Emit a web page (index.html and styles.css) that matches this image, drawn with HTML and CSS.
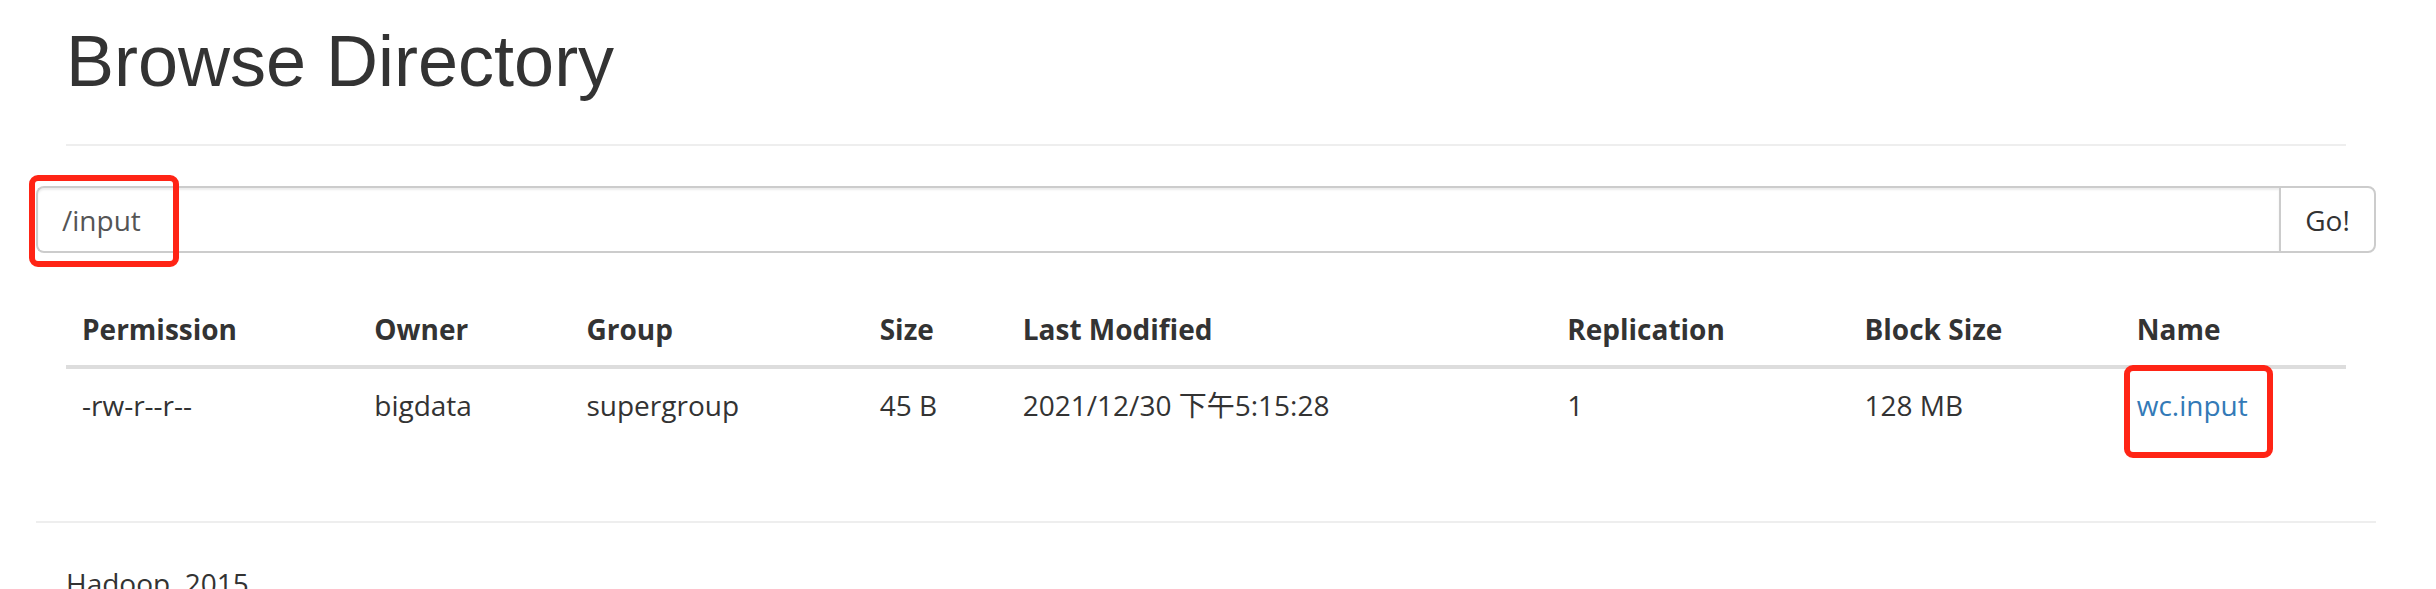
FILE: index.html
```html
<!DOCTYPE html>
<html>
<head>
<meta charset="utf-8">
<title>Browsing HDFS</title>
<link rel="stylesheet" href="styles.css">
</head>
<body>
<div class="container">
  <div class="page-header"><h1>Browse Directory</h1></div>
  <div class="row">
    <form class="nav-form" onsubmit="return false;">
      <div class="input-group">
        <input type="text" class="form-control" value="/input">
        <button class="btn" type="submit">Go!</button>
      </div>
    </form>
  </div>
  <div class="spacer"></div>
  <div class="panel">
    <table class="table">
      <colgroup>
        <col class="c1"><col class="c2"><col class="c3"><col class="c4">
        <col class="c5"><col class="c6"><col class="c7"><col class="c8">
      </colgroup>
      <thead>
        <tr>
          <th>Permission</th><th>Owner</th><th>Group</th><th>Size</th>
          <th>Last Modified</th><th>Replication</th><th>Block Size</th><th>Name</th>
        </tr>
      </thead>
      <tbody>
        <tr>
          <td>-rw-r--r--</td><td>bigdata</td><td>supergroup</td><td>45 B</td>
          <td>2021/12/30 下午5:15:28</td><td>1</td><td>128 MB</td><td><a href="#">wc.input</a></td>
        </tr>
      </tbody>
    </table>
  </div>
  <div class="row footer-row">
    <hr class="footer-hr">
    <div class="col"><p>Hadoop, 2015.</p></div>
  </div>
</div>
<div class="mark mark-input"></div>
<div class="mark mark-name"></div>
</body>
</html>
```
FILE: styles.css
```css
* { box-sizing: border-box; }
html, body { margin: 0; padding: 0; }
body {
  font-family: "Open Sans", "Noto Sans CJK SC", sans-serif;
  font-size: 28px;
  line-height: 40px;
  color: #333;
  background: #fff;
  position: relative;
  overflow: hidden;
  height: 589px;
}
.container {
  width: 2340px;
  margin-left: 36px;
  padding: 0 30px;
}
.page-header {
  margin: 0 0 40px 0;
  padding-bottom: 23px;
  border-bottom: 2px solid #eee;
}
.page-header h1 {
  margin: 22px 0 20px 0;
  font-family: "Liberation Sans", Arial, sans-serif;
  font-weight: 400;
  font-size: 72px;
  line-height: 79.2px;
  color: #333;
}
.row { margin: 0 -30px; }
.nav-form { margin: 0; }
.input-group {
  display: flex;
  height: 67px;
}
.form-control {
  flex: 1;
  height: 67px;
  margin: 0;
  padding: 0 24px;
  border: 2px solid #ccc;
  border-right: 0;
  border-radius: 8px 0 0 8px;
  font-family: "Open Sans", "Noto Sans CJK SC", sans-serif;
  font-size: 28px;
  color: #555;
  background: #fff;
  box-shadow: inset 0 2px 2px rgba(0,0,0,0.075);
  outline: none;
}
.btn {
  width: 97px;
  height: 67px;
  margin: 0;
  padding: 0;
  border: 2px solid #ccc;
  border-radius: 0 8px 8px 0;
  background: #fff;
  font-family: "Open Sans", "Noto Sans CJK SC", sans-serif;
  font-size: 28px;
  color: #333;
}
.spacer { height: 40px; }
.table {
  width: 100%;
  border-collapse: collapse;
  border-spacing: 0;
  margin-bottom: 40px;
  table-layout: fixed;
}
.c1 { width: 292px; }
.c2 { width: 212px; }
.c3 { width: 293px; }
.c4 { width: 143px; }
.c5 { width: 544px; }
.c6 { width: 297px; }
.c7 { width: 272px; }
.c8 { width: 225px; }
.table th, .table td {
  padding: 16px;
  line-height: 40px;
  text-align: left;
  vertical-align: top;
  white-space: nowrap;
}
.table th {
  font-weight: 700;
  border-bottom: 4px solid #ddd;
}
.table td { border-top: 2px solid #ddd; }
.table a { color: #337ab7; text-decoration: none; }
.footer-row { padding-top: 40px; }
.footer-hr {
  margin: 0 0 40px 0;
  border: 0;
  border-top: 2px solid #eee;
  height: 0;
}
.col { padding: 0 30px; }
.col p { margin: 0 0 20px 0; }
.mark {
  position: absolute;
  border: 6px solid #ff2415;
  border-radius: 9px;
}
.mark-input { left: 29px; top: 175px; width: 150px; height: 92px; }
.mark-name { left: 2124px; top: 365px; width: 149px; height: 93px; }
```
